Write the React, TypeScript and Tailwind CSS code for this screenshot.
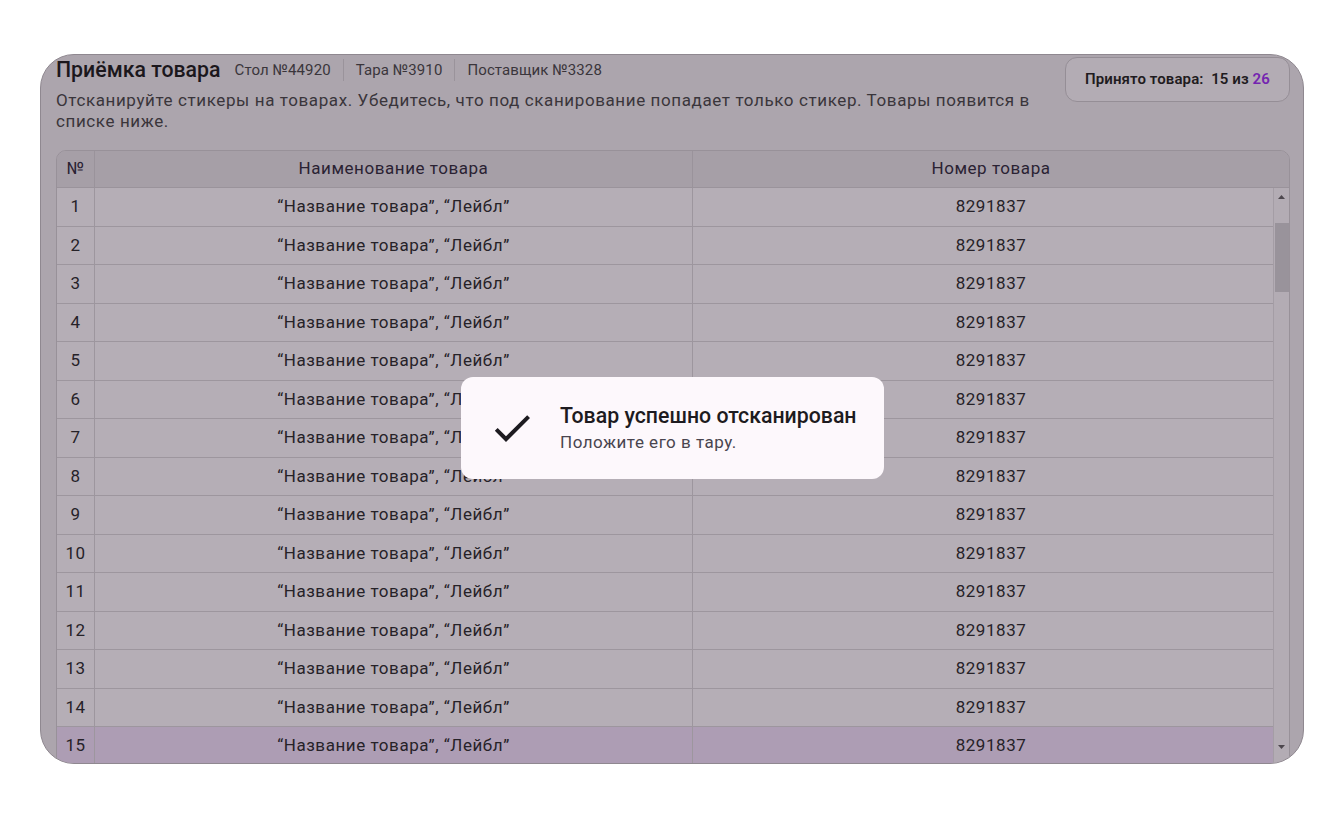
import { Fragment } from "react";

const rows = Array.from({ length: 15 }, (_, i) => ({
  id: i + 1,
  name: "“Название товара”, “Лейбл”",
  code: "8291837",
}));

const meta = ["Стол №44920", "Тара №3910", "Поставщик №3328"];

function CheckIcon() {
  return (
    <svg width="48" height="48" viewBox="0 0 24 24" fill="#1d1b20">
      <path d="M9 16.17L4.83 12l-1.42 1.41L9 19 21 7l-1.41-1.41z" />
    </svg>
  );
}

export default function App() {
  return (
    <div
      className="relative w-full h-[818px] bg-white overflow-hidden"
      style={{ fontFamily: "Roboto, 'Noto Sans', sans-serif" }}
    >
      <div className="mx-[40px] mt-[54px] h-[710px] rounded-[34px] border border-[#8f8890] bg-[#aca5ad] overflow-hidden pl-[15px] pr-[13px] pt-[1px]">
        {/* Header */}
        <div className="flex items-start gap-[10px]">
          <div className="flex-1 min-w-0">
            <div className="flex items-center h-[28px]">
              <h1 className="text-[21.3px] font-medium text-[#1b171c] leading-[28px] mr-[14px]">
                Приёмка товара
              </h1>
              {meta.map((m, i) => (
                <Fragment key={m}>
                  {i > 0 && <div className="w-px h-[22px] bg-[#9a939b] mx-[12px]" />}
                  <span className="text-[15px] text-[#3a353b] tracking-[0.1px]">{m}</span>
                </Fragment>
              ))}
            </div>
            <p className="mt-[6px] text-[17px] leading-[21px] tracking-[0.6px] text-[#3a353b]">
              Отсканируйте стикеры на товарах. Убедитесь, что под сканирование попадает только
              стикер. Товары появится в списке ниже.
            </p>
          </div>
          <div className="w-[225px] h-[45px] mt-[1px] rounded-[12px] border border-[#958e96] bg-[#b3acb4] flex items-center justify-center text-[15px] font-semibold text-[#1f1b20] tracking-[0.1px]">
            Принято товара:&nbsp; 15 из&nbsp;<span className="text-[#7424b0]">26</span>
          </div>
        </div>

        {/* Table */}
        <div className="mt-[18px] rounded-t-[10px] border border-[#989199] overflow-hidden">
          <div className="grid grid-cols-[37px_598px_1fr] h-[37px] bg-[#a69fa7] border-b border-[#9a939b] text-[17px] tracking-[0.55px] text-[#2a2233]">
            <div className="flex items-center justify-center">№</div>
            <div className="flex items-center justify-center border-l border-[#9a939b]">
              Наименование товара
            </div>
            <div className="flex items-center justify-center border-l border-[#9a939b]">
              Номер товара
            </div>
          </div>
          <div className="flex h-[577px] overflow-hidden">
            <div className="flex-1">
              {rows.map((r) => (
                <div
                  key={r.id}
                  className={
                    "grid grid-cols-[37px_598px_1fr] h-[38.5px] border-b border-[#9d969e] text-[17px] tracking-[0.55px] text-[#262228] " +
                    (r.id === 15 ? "bg-[#ad9db4]" : "bg-[#b5aeb6]")
                  }
                >
                  <div className="flex items-center justify-center">{r.id}</div>
                  <div className="flex items-center justify-center border-l border-[#9d969e]">
                    {r.name}
                  </div>
                  <div className="flex items-center justify-center border-l border-[#9d969e] pl-[16px]">
                    {r.code}
                  </div>
                </div>
              ))}
            </div>
            {/* Scrollbar */}
            <div className="w-[16px] flex flex-col items-center bg-[#b3acb4] border-l border-[#a49da5]">
              <div className="h-[18px] flex items-center justify-center">
                <svg width="7" height="4" viewBox="0 0 7 4">
                  <path d="M0 4L3.5 0 7 4z" fill="#4d474e" />
                </svg>
              </div>
              <div className="mt-[17px] w-[14px] h-[69px] bg-[#99939b]" />
              <div className="flex-1" />
              <div className="h-[26px] flex items-start justify-center pt-[6px]">
                <svg width="7" height="4" viewBox="0 0 7 4">
                  <path d="M0 0L7 0 3.5 4z" fill="#4d474e" />
                </svg>
              </div>
            </div>
          </div>
        </div>
      </div>

      {/* Scan result toast */}
      <div className="absolute left-[461px] top-[377px] w-[423px] h-[102px] rounded-[12px] bg-[#fdf8fc] flex items-center pl-[27px] pr-[20px]">
        <CheckIcon />
        <div className="ml-[24px] whitespace-nowrap">
          <div className="text-[21.3px] leading-[26px] font-medium text-[#1d1b20]">
            Товар успешно отсканирован
          </div>
          <div className="mt-[2px] text-[17px] leading-[22px] tracking-[0.5px] text-[#49454f]">
            Положите его в тару.
          </div>
        </div>
      </div>
    </div>
  );
}
